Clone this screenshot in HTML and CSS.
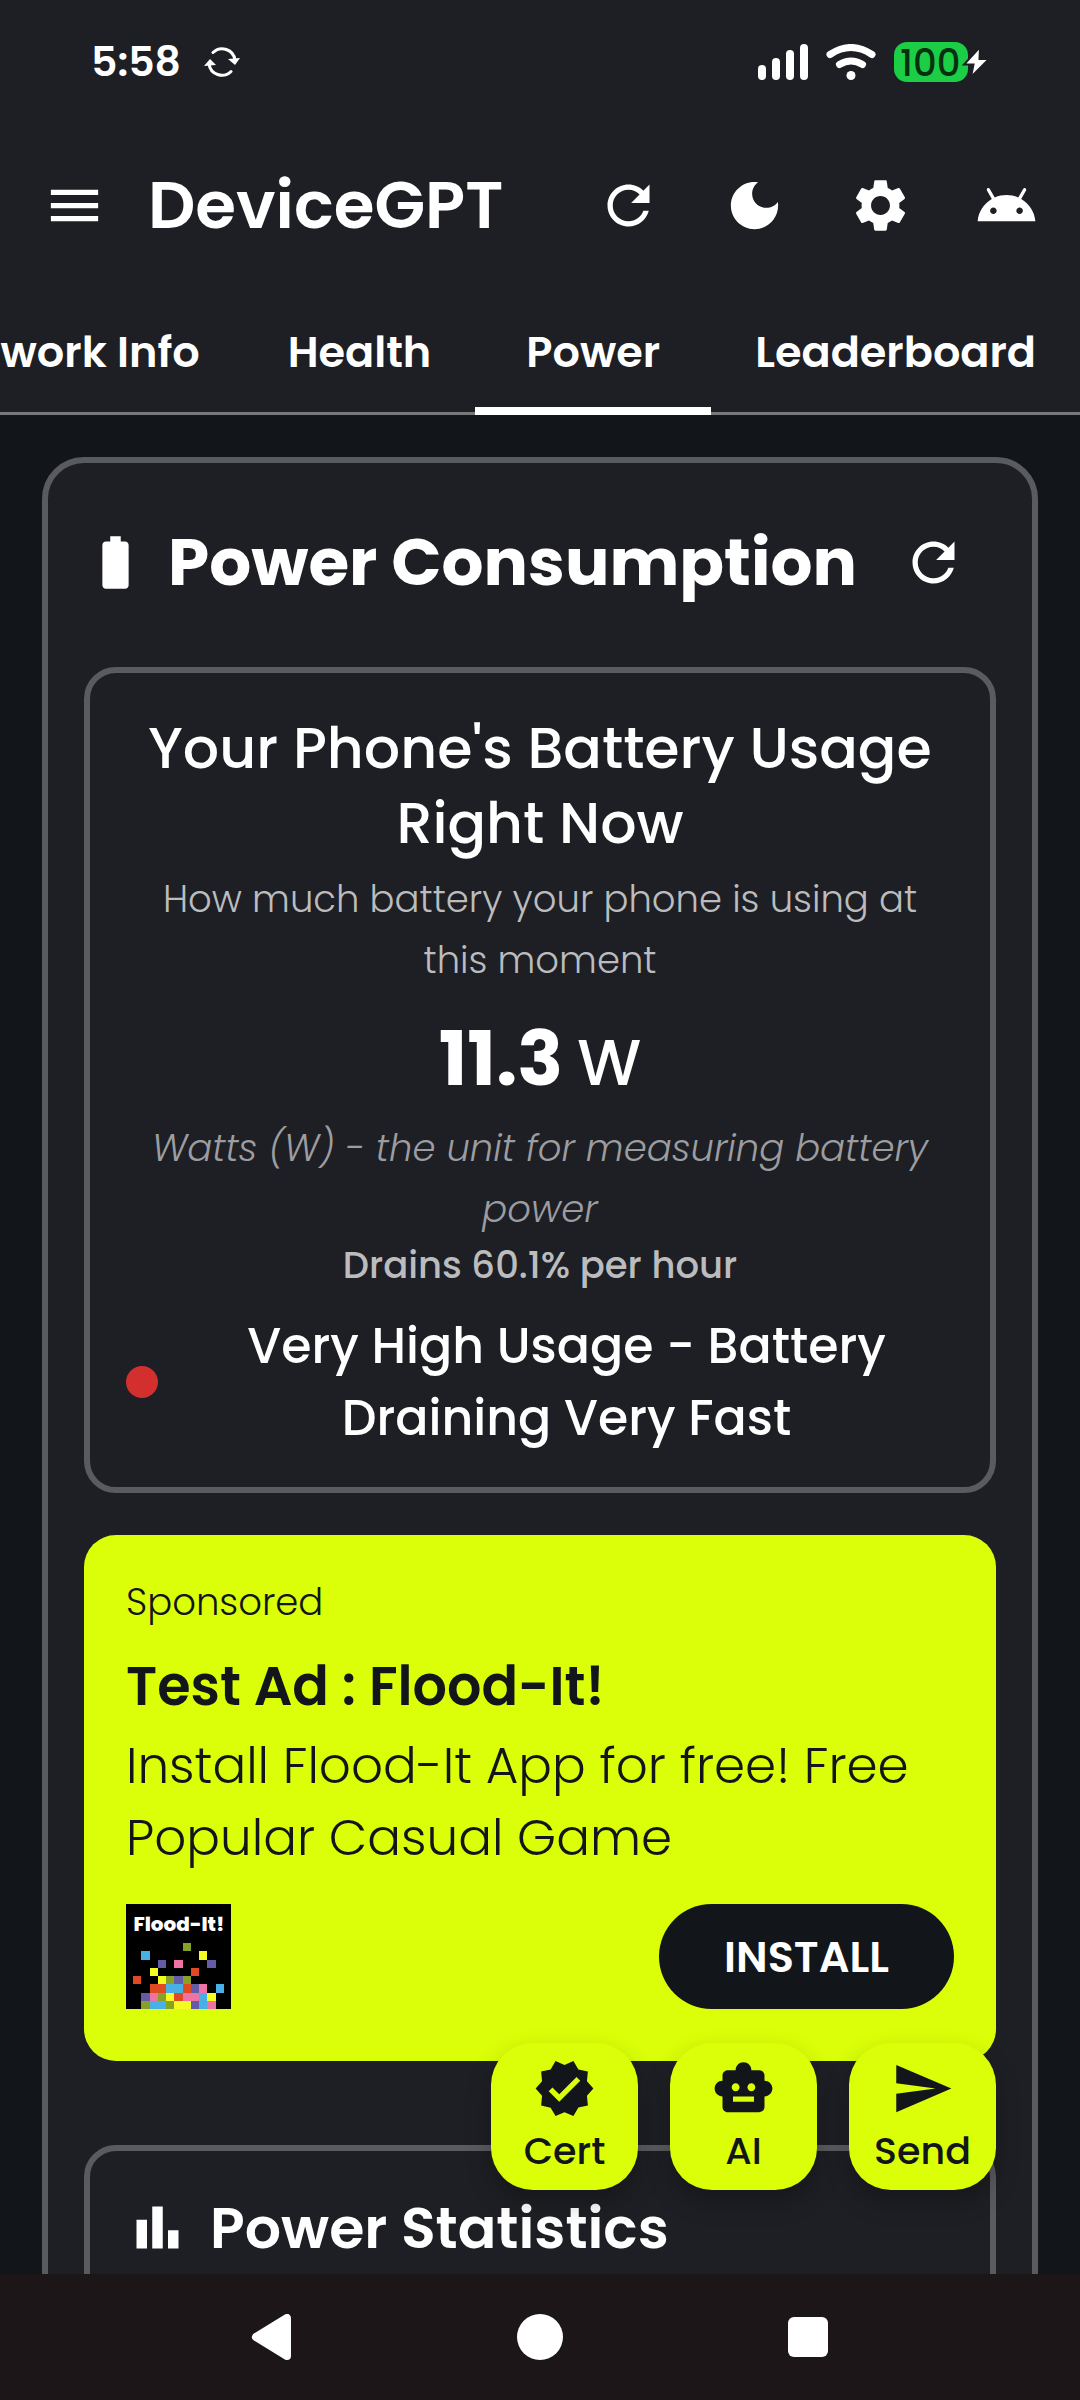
FILE: index.html
```html
<!DOCTYPE html>
<html lang="en">
<head>
  <meta charset="UTF-8">
  <meta name="viewport" content="width=device-width, initial-scale=1.0">
  <title>DeviceGPT</title>
  <link rel="stylesheet" href="styles.css">
</head>
<body>
  <div class="status-bar">
    <span class="time">5:58</span>
    <svg class="sync" viewBox="0 0 36 30" fill="none" stroke="#fff" stroke-width="3" stroke-linecap="round">
      <path d="M9 5.500A13 13 0 0 1 31 13"/>
      <path d="M27 24.500A13 13 0 0 1 5 17"/>
      <path d="M24 12l12-1-5 7z" fill="#fff" stroke="none"/>
      <path d="M12 18L0 19l6-7z" fill="#fff" stroke="none"/>
    </svg>
    <div class="status-icons">
      <svg class="signal" viewBox="0 0 50 36" fill="#fff">
        <rect x="0" y="21" width="8" height="15" rx="4"/>
        <rect x="14" y="14" width="8" height="22" rx="4"/>
        <rect x="28" y="6" width="8" height="30" rx="4"/>
        <rect x="42" y="0" width="8" height="36" rx="4"/>
      </svg>
      <svg class="wifi" viewBox="0 0 50 36" fill="none" stroke="#fff" stroke-width="7" stroke-linecap="round">
        <path d="M4 10.500Q25 -3.500 46 10.500"/>
        <path d="M13.500 20.500Q25 13.500 36.500 20.500"/>
        <circle cx="25" cy="31.500" r="4.500" fill="#fff" stroke="none"/>
      </svg>
      <div class="battery">
        <span>100</span>
        <svg class="bolt" viewBox="0 0 30 34">
          <path d="M19 2L3 19.500h9.500L10 32 28 14h-9.500z" fill="#fff" stroke="#1e1f24" stroke-width="2"/>
        </svg>
      </div>
    </div>
  </div>

  <header class="app-bar">
    <button class="icon-btn" aria-label="Menu">
      <svg class="icon" viewBox="0 0 24 24"><path d="M3 18h18v-2H3v2zm0-5h18v-2H3v2zm0-7v2h18V6H3z"/></svg>
    </button>
    <h1>DeviceGPT</h1>
    <button class="icon-btn" aria-label="Refresh">
      <svg class="icon" viewBox="0 0 24 24"><path d="M17.650 6.350C16.200 4.900 14.210 4 12 4c-4.420 0-7.990 3.580-7.990 8s3.570 8 7.990 8c3.730 0 6.840-2.550 7.730-6h-2.080c-.82 2.330-3.040 4-5.650 4-3.310 0-6-2.690-6-6s2.690-6 6-6c1.660 0 3.140.69 4.220 1.780L13 11h7V4l-2.350 2.350z"/></svg>
    </button>
    <button class="icon-btn" aria-label="Dark mode">
      <svg class="icon" viewBox="0 0 24 24"><path d="M12 3c-4.970 0-9 4.030-9 9s4.030 9 9 9 9-4.030 9-9c0-.46-.04-.92-.1-1.360-.98 1.370-2.580 2.260-4.400 2.260-2.980 0-5.400-2.420-5.400-5.400 0-1.810.89-3.420 2.260-4.400-.44-.06-.9-.1-1.360-.1z"/></svg>
    </button>
    <button class="icon-btn" aria-label="Settings">
      <svg class="icon" viewBox="0 0 24 24"><path d="M19.140 12.940c.04-.3.060-.61.060-.94 0-.32-.02-.64-.07-.94l2.030-1.580c.18-.14.230-.41.120-.61l-1.920-3.320c-.12-.22-.37-.29-.59-.22l-2.390.96c-.5-.38-1.030-.7-1.620-.94l-.36-2.540c-.04-.24-.24-.41-.48-.41h-3.840c-.24 0-.43.17-.47.410l-.36 2.540c-.59.24-1.130.57-1.620.94l-2.390-.96c-.22-.08-.47 0-.59.220L2.740 8.870c-.12.21-.08.470.12.610l2.030 1.580c-.05.3-.09.630-.09.940s.02.64.070.94l-2.030 1.580c-.18.14-.23.410-.12.610l1.920 3.320c.12.220.37.290.59.220l2.390-.96c.5.380 1.030.7 1.620.94l.36 2.540c.05.240.24.410.48.410h3.840c.24 0 .44-.17.470-.41l.36-2.540c.59-.24 1.130-.56 1.620-.94l2.390.96c.22.080.47 0 .59-.22l1.920-3.320c.12-.22.070-.47-.12-.61l-2.010-1.580zM12 15.600c-1.980 0-3.600-1.620-3.600-3.600s1.620-3.600 3.600-3.600 3.600 1.620 3.600 3.600-1.620 3.600-3.600 3.600z"/></svg>
    </button>
    <button class="icon-btn" aria-label="Device">
      <svg class="icon" viewBox="0 0 24 24"><path d="M17.600 9.480l1.840-3.180c.16-.31.040-.69-.26-.85-.29-.15-.65-.06-.83.220l-1.880 3.240c-2.860-1.210-6.080-1.210-8.940 0L5.650 5.670c-.19-.29-.58-.38-.87-.2-.28.180-.37.540-.22.830L6.400 9.480C3.300 11.250 1.280 14.440 1 18h22c-.28-3.560-2.300-6.750-5.400-8.520zM7 15.250c-.69 0-1.250-.56-1.250-1.250S6.310 12.750 7 12.750s1.250.56 1.250 1.250S7.690 15.250 7 15.250zM17 15.250c-.69 0-1.250-.56-1.250-1.250s.56-1.250 1.250-1.250 1.250.56 1.250 1.250-.56 1.250-1.250 1.250z"/></svg>
    </button>
  </header>

  <nav class="tabs">
    <a href="#network">Network Info</a>
    <a href="#health">Health</a>
    <a href="#power" class="active">Power</a>
    <a href="#leaderboard">Leaderboard</a>
  </nav>

  <div class="content">
    <main class="card">
      <div class="card-header">
        <svg class="icon" viewBox="0 0 24 24"><path d="M15.670 4H14V2h-4v2H8.330C7.600 4 7 4.600 7 5.330v15.330C7 21.400 7.600 22 8.330 22h7.330c.74 0 1.340-.6 1.340-1.330V5.330C17 4.600 16.400 4 15.670 4z"/></svg>
        <h2>Power Consumption</h2>
        <button class="icon-btn" aria-label="Refresh power data">
          <svg class="icon" viewBox="0 0 24 24"><path d="M17.650 6.350C16.200 4.900 14.210 4 12 4c-4.420 0-7.990 3.580-7.990 8s3.570 8 7.990 8c3.730 0 6.840-2.550 7.730-6h-2.080c-.82 2.330-3.040 4-5.650 4-3.310 0-6-2.690-6-6s2.690-6 6-6c1.660 0 3.140.69 4.220 1.780L13 11h7V4l-2.350 2.350z"/></svg>
        </button>
      </div>

      <section class="usage">
        <h3>Your Phone's Battery Usage<br>Right Now</h3>
        <p class="hint">How much battery your phone is using at<br>this moment</p>
        <p class="watts">11.3<span>W</span></p>
        <p class="unit">Watts (W) - the unit for measuring battery<br>power</p>
        <p class="drain">Drains 60.1% per hour</p>
        <div class="level">
          <span class="dot"></span>
          <p>Very High Usage - Battery<br>Draining Very Fast</p>
        </div>
      </section>

      <section class="ad">
        <p class="ad-label">Sponsored</p>
        <h3>Test Ad : Flood-It!</h3>
        <p class="ad-body">Install Flood-It App for free! Free<br>Popular Casual Game</p>
        <div class="ad-footer">
          <svg class="ad-icon" viewBox="0 0 105 105">
            <rect width="105" height="105"/>
            <text x="53" y="27" text-anchor="middle">Flood-It!</text>
            <g transform="translate(15.300 39) scale(8.250)" shape-rendering="crispEdges">
              <path fill="#87a026" d="M5 0h1v1H5zM3 4h1v1H3zM5 4h1v1H5zM2 6h1v1H2zM0 7h1v1H0zM3 7h1v1H3z"/>
              <path fill="#48b0e4" d="M0 1h1v1H0zM3 5h2v1H3zM9 5h1v1H9zM7 6h1v2H7zM1 7h2v1H1z"/>
              <path fill="#f4fb22" d="M7 1h1v1H7zM1 3h1v1H1zM2 4h1v1H2zM3 6h1v1H3zM8 6h1v1H8zM4 7h2v1H4z"/>
              <path fill="#655ca8" d="M2 2h1v1H2zM8 2h1v1H8zM4 4h1v1H4zM6 5h1v1H6zM0 6h1v1H0zM6 7h1v1H6z"/>
              <path fill="#ee72a4" d="M4 2h1v1H4zM7 5h1v1H7zM1 6h1v1H1zM5 6h2v1H5zM8 7h1v1H8z"/>
              <path fill="#df4a22" d="M6 3h1v1H6zM-1 4h1v1h-1zM1 5h2v1H1zM5 5h1v1H5zM4 6h1v1H4z"/>
            </g>
          </svg>
          <button class="install">INSTALL</button>
        </div>
      </section>

      <section class="stats">
        <div class="stats-header">
          <svg class="icon" viewBox="0 0 24 24"><path d="M4 9h4v11H4zm6-5h4v16h-4zm6 9h4v7h-4z"/></svg>
          <h3>Power Statistics</h3>
        </div>
      </section>
    </main>

    <div class="fabs">
      <button class="fab">
        <svg class="icon" viewBox="0 0 24 24"><path d="M23 12l-2.440-2.780.34-3.680-3.610-.82-1.890-3.180L12 3 8.600 1.540 6.710 4.720l-3.610.81.340 3.680L1 12l2.440 2.780-.34 3.690 3.610.82 1.890 3.180L12 21l3.400 1.460 1.890-3.180 3.610-.82-.34-3.680L23 12zm-13 5l-4-4 1.410-1.410L10 14.170l6.590-6.590L18 9l-8 8z"/></svg>
        Cert
      </button>
      <button class="fab">
        <svg class="icon" viewBox="0 0 24 24"><path d="M20 9V7c0-1.100-.9-2-2-2h-3c0-1.660-1.340-3-3-3S9 3.340 9 5H6c-1.100 0-2 .9-2 2v2c-1.660 0-3 1.340-3 3s1.340 3 3 3v4c0 1.100.9 2 2 2h12c1.100 0 2-.9 2-2v-4c1.660 0 3-1.340 3-3s-1.340-3-3-3zM7.500 11.500c0-.83.67-1.500 1.500-1.500s1.500.67 1.500 1.500S9.830 13 9 13s-1.500-.67-1.500-1.500zM16 17H8v-2h8v2zm-1-4c-.83 0-1.500-.67-1.500-1.500S14.170 10 15 10s1.500.67 1.500 1.500S15.830 13 15 13z"/></svg>
        AI
      </button>
      <button class="fab">
        <svg class="icon" viewBox="0 0 24 24"><path d="M2.010 21L23 12 2.010 3 2 10l15 2-15 2z"/></svg>
        Send
      </button>
    </div>
  </div>

  <div class="nav-bar">
    <button aria-label="Back">
      <svg viewBox="0 0 46 46"><path d="M38 4v38L7 23z" fill="#fff" stroke="#fff" stroke-width="8" stroke-linejoin="round"/></svg>
    </button>
    <button aria-label="Home">
      <svg viewBox="0 0 46 46"><circle cx="23" cy="23" r="23" fill="#fff"/></svg>
    </button>
    <button aria-label="Recents">
      <svg viewBox="0 0 46 46"><rect x="3" y="3" width="40" height="40" rx="6" fill="#fff"/></svg>
    </button>
  </div>
</body>
</html>
```
FILE: styles.css
```css
* {
  box-sizing: border-box;
}

body {
  display: flex;
  flex-direction: column;
  height: 100vh;
  margin: 0;
  background-color: #12151a;
  color: #fff;
  font-family: Poppins, Inter, sans-serif;
  overflow: hidden;
}

h1, h2, h3, p {
  margin: 0;
}

button {
  padding: 0;
  border: none;
  background: none;
  color: inherit;
  font-family: inherit;
  cursor: pointer;
}

svg {
  display: block;
  flex-shrink: 0;
}

.icon {
  width: 63px;
  height: 63px;
  fill: currentColor;
}

.icon-btn {
  display: flex;
  align-items: center;
  justify-content: center;
  width: 126px;
  height: 126px;
  flex-shrink: 0;
}

/* status bar */
.status-bar {
  display: flex;
  align-items: center;
  flex-shrink: 0;
  height: 121px;
  padding: 2px 92px 0 91px;
  background-color: #1e1f24;
}

.time {
  font-size: 41px;
  font-weight: 600;
}

.sync {
  width: 36px;
  height: 30px;
  margin-left: 23px;
}

.status-icons {
  display: flex;
  align-items: center;
  gap: 18px;
  margin-left: auto;
}

.signal, .wifi {
  width: 50px;
  height: 36px;
}

.battery {
  position: relative;
  width: 74px;
  height: 40px;
  margin-right: 20px;
  padding-left: 6px;
  border-radius: 13px;
  background-color: #1bce46;
  color: #06300f;
  font-size: 37px;
  font-weight: 500;
  line-height: 42px;
}

.bolt {
  position: absolute;
  top: 3px;
  right: -23px;
  width: 30px;
  height: 34px;
}

/* app bar */
.app-bar {
  display: flex;
  align-items: center;
  flex-shrink: 0;
  height: 168px;
  padding: 0 11px;
  background-color: #1e1f24;
}

.app-bar h1 {
  flex: 1;
  margin-left: 11px;
  font-size: 66px;
  font-weight: 600;
  line-height: 96px;
}

/* tabs */
.tabs {
  display: flex;
  justify-content: flex-end;
  flex-shrink: 0;
  height: 126px;
  border-bottom: 3px solid #77787b;
  background-color: #1e1f24;
}

.tabs a {
  padding: 0 44px;
  color: #fff;
  font-size: 43px;
  font-weight: 600;
  line-height: 126px;
  text-align: center;
  text-decoration: none;
  white-space: nowrap;
}

.tabs .active {
  height: 126px;
  min-width: 236px;
  border-bottom: 8px solid #fff;
}

/* content */
.content {
  position: relative;
  flex: 1;
  min-height: 0;
  padding: 42px;
  overflow: hidden;
}

.card {
  min-height: 2000px;
  padding: 36px;
  border: 6px solid #5a5b5f;
  border-radius: 42px;
  background-color: #1e1f24;
}

.card-header {
  display: flex;
  align-items: center;
  margin-bottom: 42px;
}

.card-header h2 {
  flex: 1;
  margin-left: 21px;
  font-size: 66px;
  font-weight: 700;
  white-space: nowrap;
}

/* usage */
.usage {
  margin-bottom: 42px;
  padding: 38px 36px 33px;
  border: 6px solid #5a5b5f;
  border-radius: 32px;
  text-align: center;
}

.usage h3 {
  margin-bottom: 8px;
  font-size: 57px;
  font-weight: 500;
  line-height: 75px;
}

.hint, .unit {
  color: #bbbcbe;
  font-size: 37px;
  font-weight: 300;
  line-height: 61px;
}

.unit {
  color: #9c9da0;
  font-style: italic;
}

.watts {
  padding-top: 8px;
  font-size: 76px;
  font-weight: 700;
  line-height: 119px;
}

.watts span {
  margin-left: 14px;
  font-size: 64px;
  font-weight: 500;
  line-height: 1;
}

.drain {
  color: #bbbcbe;
  font-size: 37px;
  font-weight: 500;
  line-height: 50px;
}

.level {
  display: flex;
  align-items: center;
  margin-top: 20px;
}

.level p {
  flex: 1;
  margin-left: 21px;
  font-size: 49px;
  font-weight: 500;
  line-height: 72px;
}

.dot {
  width: 32px;
  height: 32px;
  border-radius: 50%;
  background-color: #d32f2f;
}

/* ad */
.ad {
  margin-bottom: 84px;
  padding: 42px 42px 52px;
  border-radius: 32px;
  background-color: #daff08;
  color: #12151a;
}

.ad-label {
  font-size: 37px;
  font-weight: 300;
  line-height: 50px;
}

.ad h3 {
  margin: 29px 0 14px;
  font-size: 54px;
  font-weight: 600;
  line-height: 60px;
}

.ad-body {
  font-size: 50px;
  font-weight: 300;
  line-height: 72px;
}

.ad-footer {
  display: flex;
  align-items: center;
  justify-content: space-between;
  margin-top: 30px;
}

.ad-icon {
  width: 105px;
  height: 105px;
}

.ad-icon text {
  fill: #fff;
  font-size: 20px;
  font-weight: 800;
}

.install {
  width: 295px;
  height: 105px;
  border-radius: 53px;
  background-color: #12151a;
  color: #fff;
  font-size: 43px;
  font-weight: 600;
}

/* stats */
.stats {
  min-height: 400px;
  padding: 36px;
  border: 6px solid #5a5b5f;
  border-radius: 32px;
}

.stats-header {
  display: flex;
  align-items: center;
  height: 81px;
}

.stats-header h3 {
  margin-left: 21px;
  font-size: 57px;
  font-weight: 600;
}

/* floating buttons */
.fabs {
  position: absolute;
  right: 84px;
  bottom: 84px;
  display: flex;
  gap: 32px;
}

.fab {
  display: flex;
  flex-direction: column;
  align-items: center;
  width: 147px;
  height: 147px;
  padding-top: 14px;
  border-radius: 42px;
  background-color: #daff08;
  box-shadow: 0 12px 24px rgba(0, 0, 0, 0.25);
  color: #12151a;
  font-size: 38px;
  font-weight: 500;
  line-height: 62px;
}

/* navigation bar */
.nav-bar {
  display: flex;
  align-items: center;
  justify-content: center;
  gap: 222px;
  flex-shrink: 0;
  height: 126px;
  background-color: #1d1619;
}

.nav-bar svg {
  width: 46px;
  height: 46px;
}
```
